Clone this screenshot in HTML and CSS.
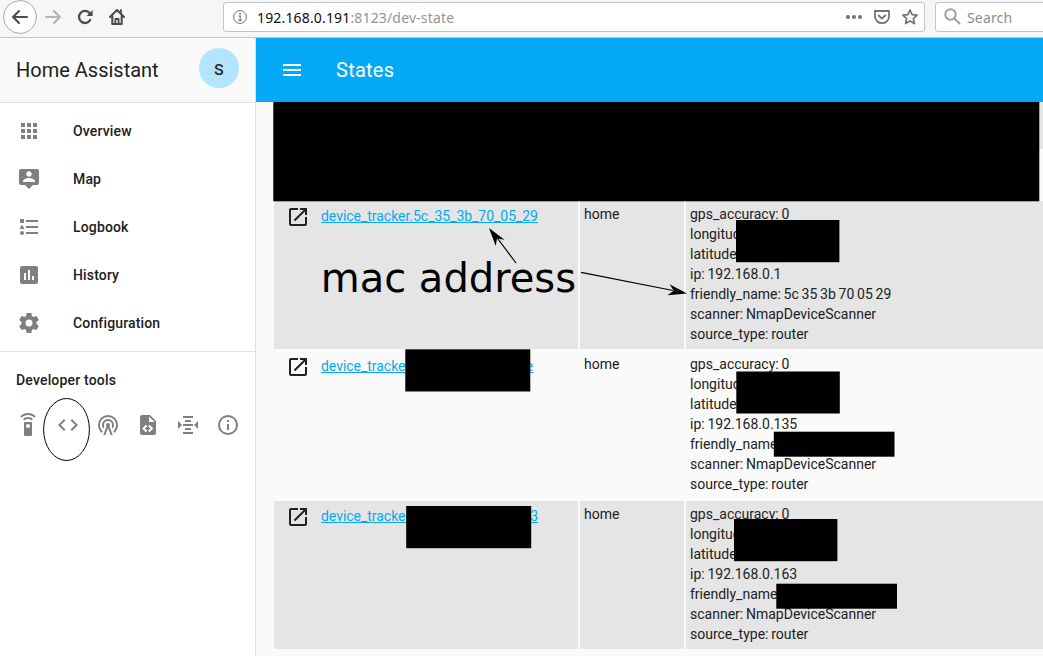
FILE: index.html
```html
<!DOCTYPE html>
<html lang="en">
<head>
<meta charset="utf-8">
<title>Home Assistant</title>
<link rel="stylesheet" href="styles.css">
</head>
<body>
<div class="window">
  <header class="browser">
    <div class="nav">
      <svg width="140" height="37" viewBox="0 0 140 37" fill="none" stroke="#4c4c4d" stroke-width="2.1" stroke-linecap="round" stroke-linejoin="round">
        <circle cx="20" cy="17" r="16.4" fill="#fdfdfd" stroke="#a9a9ab" stroke-width="1"/>
        <path d="M27 17H13M19 11l-6 6 6 6"/>
        <path stroke="#b3b4b6" d="M46 17h14M54 11l6 6-6 6"/>
        <path d="M89.7 13.2A6 6 0 1 0 90.2 20" stroke-width="2.3"/>
        <path d="M92.6 10v6h-6z" fill="#4c4c4d" stroke="none"/>
        <path d="M110 17l7-7 7 7M112.3 16v8h9.4v-8"/>
        <path d="M115.4 24v-5h3.2v5M121 10v2.5" stroke-width="1.8"/>
      </svg>
    </div>
    <div class="url">
      <svg class="url-info" width="14" height="14" viewBox="0 0 14 14"><circle cx="7" cy="7" r="6.4" fill="none" stroke="#737373" stroke-width="1"/><path d="M5.6 6h1.600v4.300M5.400 10.400h3.400" fill="none" stroke="#737373" stroke-width="1.100"/><circle cx="7" cy="3.700" r=".9" fill="#737373"/></svg>
      <span class="address"><b>192.168.0.191</b>:8123/dev-state</span>
      <svg class="url-tools" width="74" height="18" viewBox="0 0 74 18" fill="none" stroke="#737373" stroke-width="1.8" stroke-linejoin="round" stroke-linecap="round">
        <g fill="#737373" stroke="none"><circle cx="3" cy="9" r="2"/><circle cx="9" cy="9" r="2"/><circle cx="15" cy="9" r="2"/></g>
        <path d="M30 3h14v5.500a7 6.700 0 0 1-14 0zM33.700 7.500l3.300 3.200 3.300-3.200"/>
        <path stroke-width="1.700" d="M65 2l2.100 4.600 5 .6-3.700 3.400 1 5L65 13.100l-4.400 2.500 1-5-3.700-3.400 5-.6z"/>
      </svg>
    </div>
    <div class="search">
      <svg width="18" height="18" viewBox="0 0 18 18" fill="none" stroke="#a0a0a1" stroke-width="2" stroke-linecap="round"><circle cx="6.500" cy="6.500" r="5.200"/><path d="M10.500 10.500l5 5"/></svg>
      <span>Search</span>
    </div>
  </header>

  <div class="app">
    <aside class="sidebar">
      <div class="brand"><span>Home Assistant</span><span class="avatar">s</span></div>
      <nav class="menu">
        <a class="item"><svg class="icon" viewBox="0 0 24 24"><path d="M16,20H20V16H16M16,14H20V10H16M10,8H14V4H10M16,8H20V4H16M10,14H14V10H10M4,14H8V10H4M4,20H8V16H4M10,20H14V16H10M4,8H8V4H4V8Z"/></svg>Overview</a>
        <a class="item"><svg class="icon" viewBox="0 0 24 24"><path d="M20,2H4A2,2 0 0,0 2,4V16A2,2 0 0,0 4,18H8L12,22L16,18H20A2,2 0 0,0 22,16V4A2,2 0 0,0 20,2M12,4.3C13.5,4.3 14.7,5.5 14.7,7C14.7,8.5 13.5,9.7 12,9.7C10.5,9.7 9.3,8.5 9.3,7C9.3,5.5 10.5,4.3 12,4.3M18,15H6V14.1C6,12.1 10,11 12,11C14,11 18,12.1 18,14.1V15Z"/></svg>Map</a>
        <a class="item"><svg class="icon" viewBox="0 0 24 24"><path d="M5,9.5L7.5,14H2.500L5,9.5M3,4H7V8H3V4M5,20A2,2 0 0,0 7,18A2,2 0 0,0 5,16A2,2 0 0,0 3,18A2,2 0 0,0 5,20M9,5V7H21V5H9M9,19H21V17H9V19M9,13H21V11H9V13Z"/></svg>Logbook</a>
        <a class="item"><svg class="icon" viewBox="0 0 24 24"><path d="M17,17H15V13H17M13,17H11V7H13M9,17H7V10H9M19,3H5C3.890,3 3,3.890 3,5V19A2,2 0 0,0 5,21H19A2,2 0 0,0 21,19V5C21,3.890 20.1,3 19,3Z"/></svg>History</a>
        <a class="item"><svg class="icon" viewBox="0 0 24 24"><path d="M12,15.5A3.5,3.5 0 0,1 8.5,12A3.5,3.5 0 0,1 12,8.5A3.5,3.5 0 0,1 15.5,12A3.5,3.5 0 0,1 12,15.5M19.43,12.97C19.47,12.65 19.5,12.33 19.5,12C19.5,11.67 19.47,11.34 19.43,11L21.54,9.37C21.73,9.22 21.78,8.95 21.66,8.73L19.66,5.27C19.54,5.05 19.27,4.96 19.05,5.05L16.56,6.05C16.04,5.66 15.5,5.32 14.87,5.07L14.5,2.42C14.46,2.18 14.25,2 14,2H10C9.75,2 9.54,2.18 9.5,2.42L9.13,5.07C8.5,5.32 7.96,5.66 7.44,6.05L4.95,5.05C4.73,4.96 4.46,5.05 4.34,5.27L2.34,8.73C2.21,8.95 2.27,9.22 2.46,9.37L4.57,11C4.53,11.34 4.5,11.67 4.5,12C4.5,12.33 4.53,12.65 4.57,12.97L2.46,14.63C2.27,14.78 2.21,15.05 2.34,15.27L4.34,18.73C4.46,18.95 4.73,19.03 4.95,18.95L7.44,17.94C7.96,18.34 8.5,18.68 9.13,18.93L9.5,21.58C9.54,21.82 9.75,22 10,22H14C14.25,22 14.46,21.82 14.5,21.58L14.87,18.93C15.5,18.67 16.04,18.34 16.56,17.94L19.05,18.95C19.27,19.03 19.54,18.95 19.66,18.73L21.66,15.27C21.78,15.05 21.73,14.78 21.54,14.63L19.43,12.97Z"/></svg>Configuration</a>
      </nav>
      <section class="dev">
        <h2>Developer tools</h2>
        <div class="tools">
          <svg class="icon" viewBox="0 0 24 24"><path d="M12,0C8.96,0 6.21,1.23 4.22,3.22L5.63,4.63C7.26,3 9.5,2 12,2C14.5,2 16.74,3 18.36,4.64L19.77,3.23C17.79,1.23 15.04,0 12,0M7.05,6.05L8.46,7.46C9.37,6.56 10.62,6 12,6C13.38,6 14.63,6.56 15.54,7.46L16.95,6.05C15.68,4.78 13.93,4 12,4C10.07,4 8.32,4.78 7.05,6.05M12,15A2,2 0 0,1 10,13A2,2 0 0,1 12,11A2,2 0 0,1 14,13A2,2 0 0,1 12,15M15,9H9A1,1 0 0,0 8,10V22A1,1 0 0,0 9,23H15A1,1 0 0,0 16,22V10A1,1 0 0,0 15,9Z"/></svg>
          <svg class="icon" viewBox="0 0 24 24"><path d="M14.6,16.6L19.2,12L14.6,7.4L16,6L22,12L16,18L14.6,16.6M9.4,16.6L4.8,12L9.4,7.4L8,6L2,12L8,18L9.4,16.6Z"/></svg>
          <svg class="icon" viewBox="0 0 24 24"><path d="M12,10A2,2 0 0,1 14,12C14,12.5 13.82,12.94 13.53,13.29L16.7,22H14.57L12,14.93L9.43,22H7.3L10.47,13.29C10.18,12.94 10,12.5 10,12A2,2 0 0,1 12,10M12,8A4,4 0 0,0 8,12C8,12.5 8.1,13 8.28,13.46L7.4,15.86C6.53,14.81 6,13.47 6,12A6,6 0 0,1 12,6A6,6 0 0,1 18,12C18,13.47 17.47,14.81 16.6,15.86L15.72,13.46C15.9,13 16,12.5 16,12A4,4 0 0,0 12,8M12,4A8,8 0 0,0 4,12C4,14.36 5,16.5 6.64,17.94L5.92,19.94C3.54,18.11 2,15.23 2,12A10,10 0 0,1 12,2A10,10 0 0,1 22,12C22,15.23 20.46,18.11 18.08,19.94L17.36,17.94C19,16.5 20,14.36 20,12A8,8 0 0,0 12,4Z"/></svg>
          <svg class="icon" viewBox="0 0 24 24"><path d="M13,9H18.5L13,3.5V9M6,2H14L20,8V20A2,2 0 0,1 18,22H6C4.89,22 4,21.1 4,20V4C4,2.89 4.89,2 6,2M6.12,15.5L9.86,19.24L11.28,17.83L8.95,15.5L11.28,13.17L9.86,11.76L6.12,15.5M17.28,15.5L13.54,11.76L12.12,13.17L14.45,15.5L12.12,17.83L13.54,19.24L17.28,15.5Z"/></svg>
          <svg class="icon" viewBox="0 0 24 24"><path d="M7,3V5H17V3H7M9,7V9H15V7H9M2,7.96V16.04L6.03,12L2,7.96M22.03,7.96L18,12L22.03,16.04V7.96M7,11V13H17V11H7M9,15V17H15V15H9M7,19V21H17V19H7Z"/></svg>
          <svg class="icon" viewBox="0 0 24 24"><path d="M11,9H13V7H11M12,20C7.59,20 4,16.41 4,12C4,7.59 7.59,4 12,4C16.41,4 20,7.59 20,12C20,16.41 16.41,20 12,20M12,2A10,10 0 0,0 2,12A10,10 0 0,0 12,22A10,10 0 0,0 22,12A10,10 0 0,0 12,2M11,17H13V11H11V17Z"/></svg>
        </div>
      </section>
    </aside>

    <main class="main">
      <div class="toolbar">
        <svg class="icon" viewBox="0 0 24 24"><path d="M3,6H21V8H3V6M3,11H21V13H3V11M3,16H21V18H3V16Z"/></svg>
        <h1>States</h1>
      </div>
      <div class="states">
        <div class="lead shaded"></div>
        <div class="lead-gap"></div>
        <div class="row shaded">
          <div class="cell entity"><svg class="icon" viewBox="0 0 24 24"><path d="M14,3V5H17.59L7.76,14.83L9.17,16.24L19,6.41V10H21V3M19,19H5V5H12V3H5C3.89,3 3,3.9 3,5V19A2,2 0 0,0 5,21H19A2,2 0 0,0 21,19V12H19V19Z"/></svg><a>device_tracker.5c_35_3b_70_05_29</a></div>
          <div class="cell">home</div>
          <div class="cell attrs"><p>gps_accuracy: 0</p><p>longitude:</p><p>latitude:</p><p>ip: 192.168.0.1</p><p>friendly_name: 5c 35 3b 70 05 29</p><p>scanner: NmapDeviceScanner</p><p>source_type: router</p></div>
        </div>
        <div class="row">
          <div class="cell entity"><svg class="icon" viewBox="0 0 24 24"><path d="M14,3V5H17.59L7.76,14.83L9.17,16.24L19,6.41V10H21V3M19,19H5V5H12V3H5C3.89,3 3,3.9 3,5V19A2,2 0 0,0 5,21H19A2,2 0 0,0 21,19V12H19V19Z"/></svg><a class="masked short"><span>device_tracker</span><span>e</span></a></div>
          <div class="cell">home</div>
          <div class="cell attrs"><p>gps_accuracy: 0</p><p>longitude:</p><p>latitude:</p><p>ip: 192.168.0.135</p><p>friendly_name:</p><p>scanner: NmapDeviceScanner</p><p>source_type: router</p></div>
        </div>
        <div class="row shaded">
          <div class="cell entity"><svg class="icon" viewBox="0 0 24 24"><path d="M14,3V5H17.59L7.76,14.83L9.17,16.24L19,6.41V10H21V3M19,19H5V5H12V3H5C3.89,3 3,3.9 3,5V19A2,2 0 0,0 5,21H19A2,2 0 0,0 21,19V12H19V19Z"/></svg><a class="masked"><span>device_tracker</span><span>3</span></a></div>
          <div class="cell">home</div>
          <div class="cell attrs"><p>gps_accuracy: 0</p><p>longitude:</p><p>latitude:</p><p>ip: 192.168.0.163</p><p>friendly_name:</p><p>scanner: NmapDeviceScanner</p><p>source_type: router</p></div>
        </div>
      </div>
    </main>
  </div>

  <svg class="notes" width="1043" height="656" viewBox="0 0 1043 656">
    <rect x="273.300" y="102" width="766" height="99.300"/>
    <rect x="736" y="220" width="103.400" height="42.200"/>
    <rect x="405.300" y="349.300" width="125" height="42.200"/>
    <rect x="736.300" y="371.500" width="103.500" height="42"/>
    <rect x="773.800" y="431.700" width="120.700" height="25"/>
    <rect x="406.200" y="506" width="125" height="42.200"/>
    <rect x="734" y="519" width="103.400" height="42.200"/>
    <rect x="776.300" y="583.700" width="120.700" height="25"/>
    <ellipse cx="66.500" cy="429.500" rx="22.900" ry="31" fill="none" stroke="#000" stroke-width="1"/>
    <path d="M516 263L495 235M581 272.300L673 290.500" stroke="#000" stroke-width="1.200" fill="none"/>
    <path d="M489 228l15.500 11.700-7.500-1.200-1.300 7.500z"/>
    <path d="M687 293.500l-17.500-9.300 4.300 6.500-6.300 4.500z"/>
    <text x="320.700" y="291.700">mac address</text>
  </svg>
</div>
</body>
</html>
```
FILE: styles.css
```css
* { box-sizing: border-box; }
body { margin: 0; font-family: Roboto, sans-serif; font-size: 14px; color: #212121; }
h1, h2, p { margin: 0; font-weight: 400; }
.window { position: relative; width: 1043px; height: 656px; overflow: hidden; display: flex; flex-direction: column; background: #fafafa; }
.icon { width: 24px; height: 24px; flex: none; fill: #7f7f7f; }

.browser { height: 38px; flex: none; display: flex; align-items: flex-start; background: #f5f6f8; border-bottom: 1px solid #bfc3cb; font-family: "Noto Sans", sans-serif; }
.nav { width: 223px; height: 37px; flex: none; }
.nav svg { display: block; }
.url, .search { height: 30px; margin-top: 2px; display: flex; align-items: center; background: #fff; border: 1px solid #bfc4cf; border-radius: 3px; }
.url { width: 702px; flex: none; padding: 0 5px 0 9px; }
.address { margin-left: 10px; color: #939395; font-size: 14px; letter-spacing: .16px; }
.address b { font-weight: 400; color: #0c0c0d; }
.url-tools { margin-left: auto; }
.search { width: 120px; flex: none; margin-left: 10px; padding-left: 8px; gap: 5px; color: #8b8b8d; letter-spacing: .15px; }

.app { flex: 1; min-height: 0; display: flex; }
.sidebar { width: 256px; flex: none; background: #fff; border-right: 1px solid #e0e0e0; }
.brand { height: 65px; padding: 0 16px; display: flex; align-items: center; justify-content: space-between; background: #fafafa; border-bottom: 1px solid #e0e0e0; font-size: 20px; }
.avatar { width: 40px; height: 40px; margin-bottom: 4px; border-radius: 50%; background: #b3e5fc; font-size: 20px; line-height: 40px; text-align: center; }
.menu { padding: 4px 0; border-bottom: 1px solid #e0e0e0; font-weight: 500; letter-spacing: .15px; }
.item { height: 48px; padding-left: 17px; display: flex; align-items: center; gap: 32px; }
.dev { padding: 18px 16px; }
.dev h2 { font-size: 14px; font-weight: 500; line-height: 20px; letter-spacing: .18px; }
.tools { display: flex; gap: 16px; margin-top: 23px; }

.main { flex: 1; min-width: 0; display: flex; flex-direction: column; }
.toolbar { height: 64px; flex: none; padding-left: 24px; display: flex; align-items: center; gap: 32px; background: #03a9f4; color: #fff; }
.toolbar .icon { fill: #fff; }
.toolbar h1 { font-size: 20px; letter-spacing: .25px; }
.states { padding-left: 18px; }
.lead { height: 47px; background: #e5e5e5; }
.lead-gap { height: 52px; }
.row { height: 148px; margin-bottom: 2px; display: grid; grid-template-columns: 304px 104px 1fr; gap: 2px; line-height: 20px; }
.shaded .cell { background: #e5e5e5; }
.cell { padding: 3px 4px 5px; white-space: nowrap; overflow: hidden; }
.attrs { word-spacing: -.7px; }
.entity { display: flex; align-items: flex-start; gap: 11px; padding: 4px 0 0 12px; }
.entity .icon { fill: #212121; }
.entity a { color: #03a9f4; text-decoration: underline; line-height: 22px; letter-spacing: -.03px; }
.entity .masked { width: 217px; height: 19px; display: flex; justify-content: space-between; }
.entity .masked.short { width: 212px; }

.notes { position: absolute; left: 0; top: 0; }
.notes text { font-family: "DejaVu Sans", sans-serif; font-size: 40px; }
```
